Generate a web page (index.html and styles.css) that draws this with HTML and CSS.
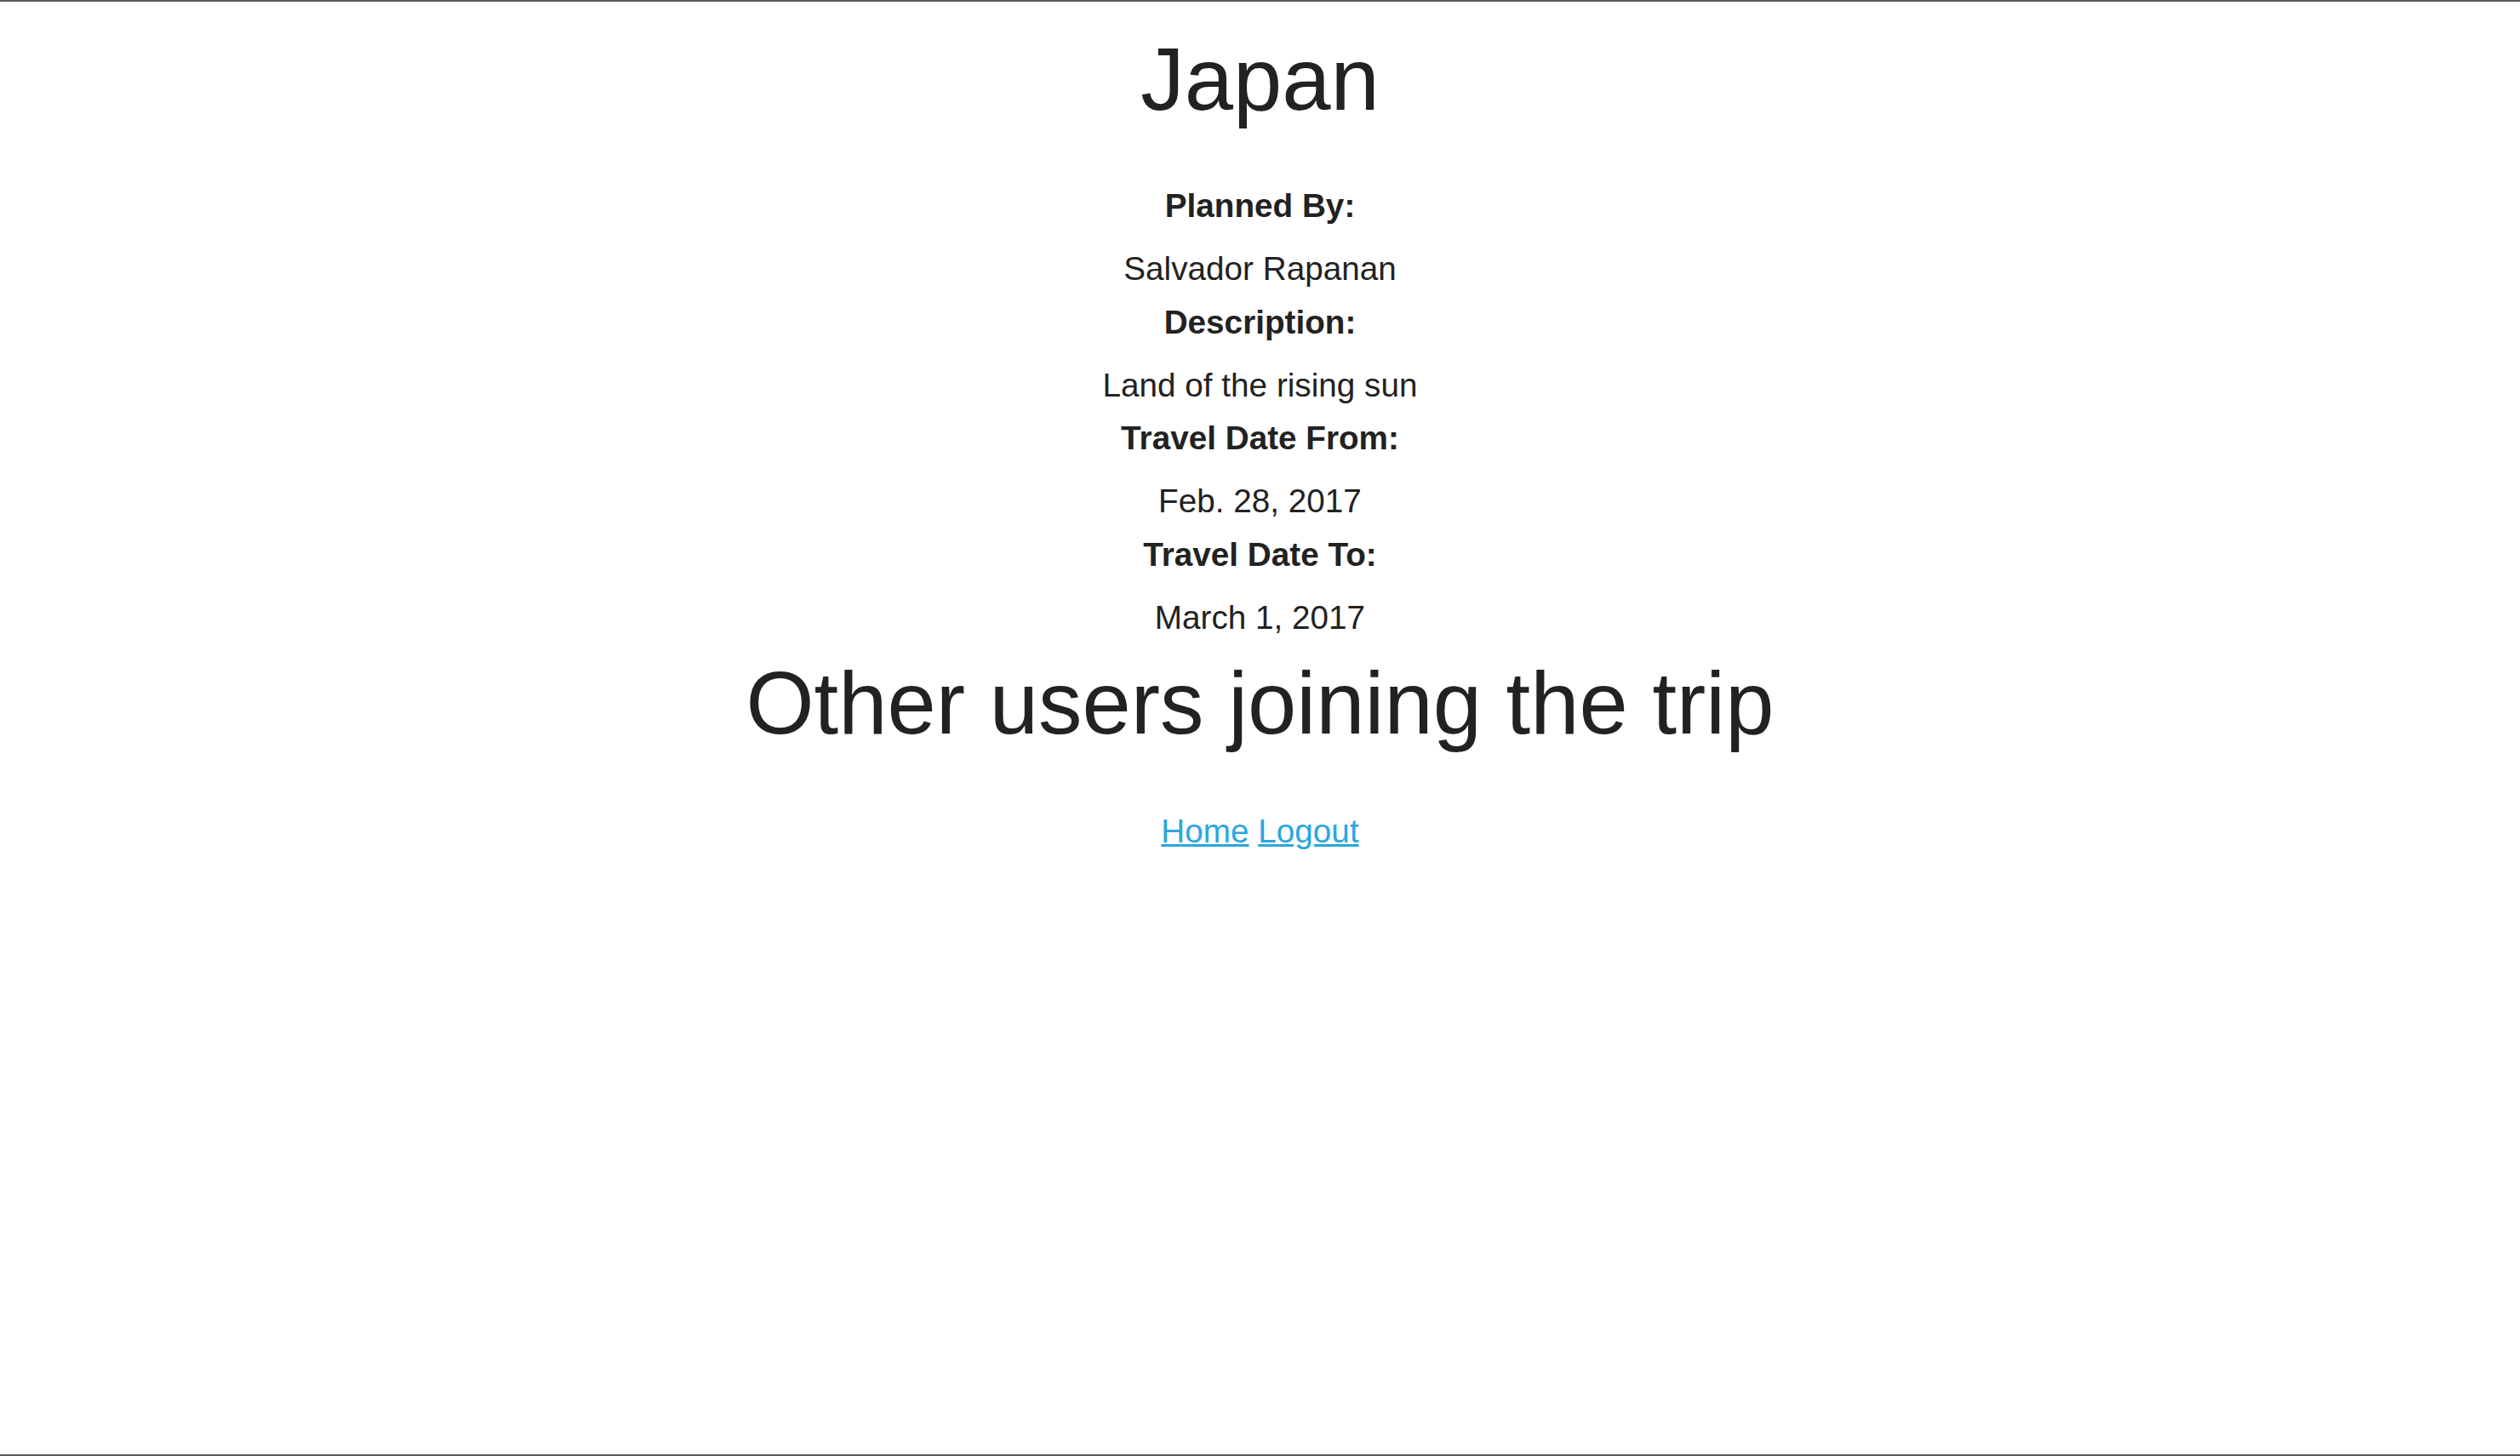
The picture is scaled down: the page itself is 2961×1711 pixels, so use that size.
FILE: index.html
```html
<!DOCTYPE html>
<html lang="en">
<head>
<meta charset="utf-8">
<title>Japan</title>
<link rel="stylesheet" href="styles.css">
</head>
<body>
<div class="screen">
  <main class="trip">
    <h1 class="trip-title">Japan</h1>
    <dl class="details">
      <dt class="label">Planned By:</dt>
      <dd class="value">Salvador Rapanan</dd>
      <dt class="label">Description:</dt>
      <dd class="value">Land of the rising sun</dd>
      <dt class="label">Travel Date From:</dt>
      <dd class="value">Feb. 28, 2017</dd>
      <dt class="label">Travel Date To:</dt>
      <dd class="value">March 1, 2017</dd>
    </dl>
    <h2 class="section-title">Other users joining the trip</h2>
    <nav class="links">
      <a href="#" class="link">Home</a> <a href="#" class="link">Logout</a>
    </nav>
  </main>
</div>
</body>
</html>
```

FILE: styles.css
```css
html, body {
  margin: 0;
  padding: 0;
  background: #ffffff;
}

.screen {
  box-sizing: border-box;
  min-height: 100vh;
  border-top: 2px solid #595959;
  border-bottom: 2px solid #595959;
  font-family: "Liberation Sans", Arial, sans-serif;
  color: #222222;
}

.trip {
  display: flex;
  flex-direction: column;
  align-items: center;
  text-align: center;
}

.trip-title,
.section-title {
  font-size: 103px;
  font-weight: 400;
  line-height: 117px;
  margin: 0;
}

.trip-title {
  margin-top: 33px;
}

.details {
  margin: 59px 0 0;
  display: flex;
  flex-direction: column;
  align-items: center;
}

.label,
.value {
  font-size: 38.7px;
  line-height: 62.5px;
  margin: 0;
}

.label {
  font-weight: 700;
}

.value {
  margin-top: 11.5px;
}

.section-title {
  margin-top: 11px;
}

.links {
  margin-top: 60px;
  font-size: 38.7px;
  line-height: 63px;
}

.link {
  color: #2ba6de;
  text-decoration: underline;
}
```
